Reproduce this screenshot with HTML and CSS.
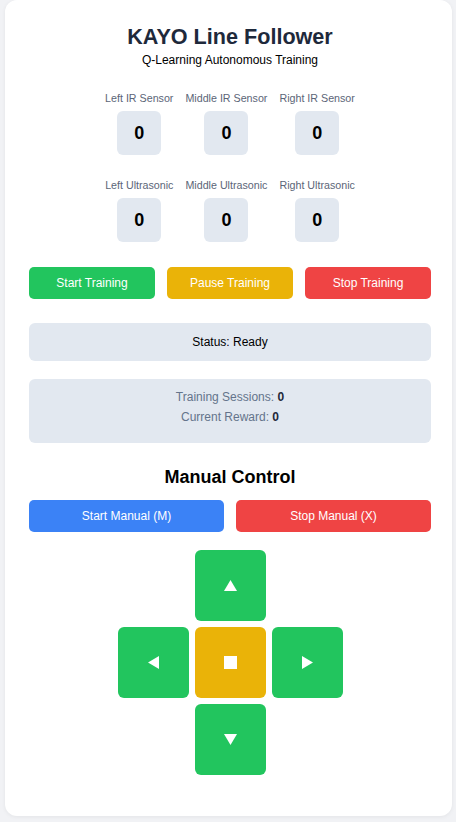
FILE: index.html
```html
<!DOCTYPE html>
<html lang="en">
<head>
<meta charset="utf-8">
<title>KAYO Line Follower</title>
<link rel="stylesheet" href="styles.css">
</head>
<body>
<main class="card">
  <h1 class="title">KAYO Line Follower</h1>
  <p class="subtitle">Q-Learning Autonomous Training</p>

  <div class="sensors">
    <div class="sensor"><span class="sensor-label">Left IR Sensor</span><div class="sensor-value">0</div></div>
    <div class="sensor"><span class="sensor-label">Middle IR Sensor</span><div class="sensor-value">0</div></div>
    <div class="sensor"><span class="sensor-label">Right IR Sensor</span><div class="sensor-value">0</div></div>
  </div>
  <div class="sensors sensors-second">
    <div class="sensor"><span class="sensor-label">Left Ultrasonic</span><div class="sensor-value">0</div></div>
    <div class="sensor"><span class="sensor-label">Middle Ultrasonic</span><div class="sensor-value">0</div></div>
    <div class="sensor"><span class="sensor-label">Right Ultrasonic</span><div class="sensor-value">0</div></div>
  </div>

  <div class="btn-row three">
    <button class="btn green">Start Training</button>
    <button class="btn yellow">Pause Training</button>
    <button class="btn red">Stop Training</button>
  </div>

  <div class="status">Status: Ready</div>

  <div class="stats">
    <div>Training Sessions: <b>0</b></div>
    <div>Current Reward: <b>0</b></div>
  </div>

  <h2 class="section-title">Manual Control</h2>
  <div class="btn-row two">
    <button class="btn blue">Start Manual (M)</button>
    <button class="btn red">Stop Manual (X)</button>
  </div>

  <div class="dpad">
    <button class="pad green up" aria-label="Forward"><svg width="13" height="11" viewBox="0 0 13 11"><polygon points="6.5,0 13,11 0,11" fill="#fff"/></svg></button>
    <button class="pad green left" aria-label="Left"><svg width="11" height="13" viewBox="0 0 11 13"><polygon points="0,6.5 11,0 11,13" fill="#fff"/></svg></button>
    <button class="pad yellow center" aria-label="Stop"><svg width="13" height="13" viewBox="0 0 13 13"><rect width="13" height="13" fill="#fff"/></svg></button>
    <button class="pad green right" aria-label="Right"><svg width="11" height="13" viewBox="0 0 11 13"><polygon points="11,6.5 0,0 0,13" fill="#fff"/></svg></button>
    <button class="pad green down" aria-label="Backward"><svg width="13" height="11" viewBox="0 0 13 11"><polygon points="0,0 13,0 6.5,11" fill="#fff"/></svg></button>
  </div>
</main>
</body>
</html>
```

FILE: styles.css
```css
* { box-sizing: border-box; }
html, body { margin: 0; padding: 0; }
body {
  background: #f1f2f5;
  font-family: "Liberation Sans", Arial, sans-serif;
  padding: 0 4px 6px 5px;
  color: #000;
}
.card {
  background: #fff;
  border-radius: 12px;
  box-shadow: 0 1px 4px rgba(0,0,0,0.06);
  padding: 24px 21px 40px 24px;
  height: 816px;
}
.title {
  margin: 0;
  font-size: 21.6px;
  line-height: 26px;
  font-weight: 700;
  color: #1e293b;
  text-align: center;
}
.subtitle {
  margin: 3px 0 0;
  font-size: 12px;
  line-height: 14px;
  text-align: center;
}
.sensors {
  display: flex;
  justify-content: center;
  gap: 12px;
  margin-top: 25px;
}
.sensors-second { margin-top: 24px; }
.sensor {
  display: flex;
  flex-direction: column;
  align-items: center;
  gap: 6px;
}
.sensor-label {
  font-size: 10.7px;
  line-height: 13px;
  color: #5b6577;
}
.sensor-value {
  width: 44px;
  height: 44px;
  border-radius: 6px;
  background: #e2e8f0;
  display: flex;
  align-items: center;
  justify-content: center;
  font-size: 18px;
  font-weight: 700;
}
.btn-row {
  display: grid;
  gap: 12px;
}
.btn-row.three { grid-template-columns: repeat(3, 1fr); margin-top: 25px; }
.btn-row.two { grid-template-columns: repeat(2, 1fr); margin-top: 12px; }
.btn {
  border: 0;
  height: 32px;
  border-radius: 5px;
  color: #fff;
  font-family: inherit;
  font-size: 12px;
  padding: 0;
}
.green { background: #22c55e; }
.yellow { background: #eab308; }
.red { background: #ef4444; }
.blue { background: #3b82f6; }
.status {
  margin-top: 24px;
  height: 38px;
  border-radius: 6px;
  background: #e2e8f0;
  display: flex;
  align-items: center;
  justify-content: center;
  font-size: 12px;
}
.stats {
  margin-top: 18px;
  background: #e2e8f0;
  border-radius: 6px;
  padding: 8px 0;
  height: 64px;
  text-align: center;
  font-size: 12px;
  line-height: 20px;
  color: #64748b;
}
.stats b { color: #1e293b; }
.section-title {
  margin: 23px 0 0;
  font-size: 18px;
  line-height: 22px;
  font-weight: 700;
  text-align: center;
}
.dpad {
  display: grid;
  grid-template-columns: repeat(3, 71px);
  grid-template-rows: repeat(3, 71px);
  gap: 6px;
  justify-content: center;
  margin-top: 18px;
}
.pad {
  border: 0;
  border-radius: 6px;
  display: flex;
  align-items: center;
  justify-content: center;
  padding: 0;
}
.up { grid-column: 2; grid-row: 1; }
.left { grid-column: 1; grid-row: 2; }
.center { grid-column: 2; grid-row: 2; }
.right { grid-column: 3; grid-row: 2; }
.down { grid-column: 2; grid-row: 3; }
```
